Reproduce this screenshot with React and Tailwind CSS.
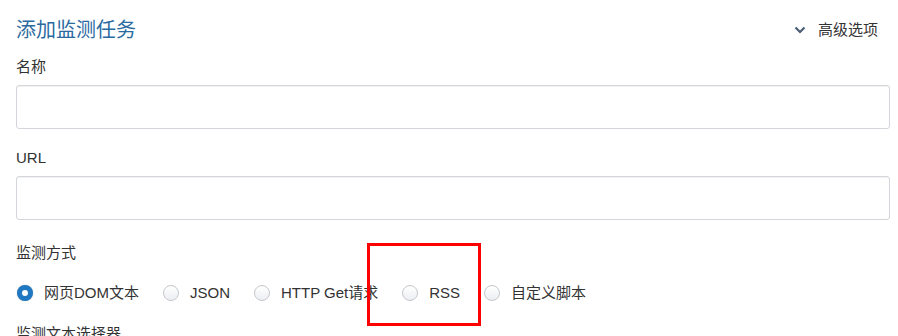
import React from 'react';

const font = { fontFamily: '"Liberation Sans", "Noto Sans CJK SC", sans-serif' };

function Radio({ label, checked }) {
  return (
    <label className="flex items-center gap-[11px] text-[15px] text-[#333] leading-5">
      {checked ? (
        <span className="w-4 h-4 rounded-full border-[5px] border-[#1f78c1] bg-white shadow-[0_0_1px_rgba(0,0,0,0.4)]" />
      ) : (
        <span className="w-4 h-4 rounded-full border border-[#c4c8cc] bg-gradient-to-b from-white to-[#eceef2]" />
      )}
      <span>{label}</span>
    </label>
  );
}

export default function App() {
  return (
    <div className="relative w-[898px] h-[336px] overflow-hidden bg-white" style={font}>
      <div className="pl-4 pr-2 pt-[14px]">
        <div className="flex items-center justify-between h-8">
          <h2 className="text-[20px] text-[#2b6a9f] leading-8">添加监测任务</h2>
          <div className="flex items-center gap-[12px] pr-[12px] text-[15px] text-[#333]">
            <svg width="12" height="8" viewBox="0 0 12 8" className="text-[#4b5d73]">
              <path d="M1.5 1.5 L6 6 L10.5 1.5" fill="none" stroke="currentColor" strokeWidth="2.2" />
            </svg>
            <span>高级选项</span>
          </div>
        </div>

        <div className="mt-[10px] text-[15px] text-[#333] leading-[21px]">名称</div>
        <div className="mt-[8px] h-[44px] rounded-[3px] border border-[#d3d6da] shadow-[inset_0_1px_1px_rgba(0,0,0,0.06)]" />

        <div className="mt-[18px] text-[15px] text-[#333] leading-[21px]">URL</div>
        <div className="mt-[8px] h-[44px] rounded-[3px] border border-[#d3d6da] shadow-[inset_0_1px_1px_rgba(0,0,0,0.06)]" />

        <div className="mt-[22px] text-[15px] text-[#333] leading-[21px]">监测方式</div>
        <div className="mt-[20px] flex items-center gap-[24px] pl-[1px]">
          <Radio label="网页DOM文本" checked />
          <Radio label="JSON" />
          <Radio label="HTTP Get请求" />
          <Radio label="RSS" />
          <Radio label="自定义脚本" />
        </div>

        <div className="mt-[20px] text-[15px] text-[#333] leading-[21px]">监测文本选择器</div>
      </div>

      <div className="absolute left-[367px] top-[243px] w-[114px] h-[83px] border-[3px] border-[#ff0000]" />
    </div>
  );
}
